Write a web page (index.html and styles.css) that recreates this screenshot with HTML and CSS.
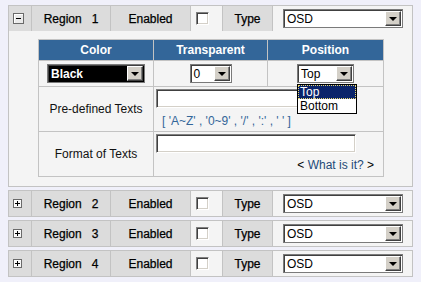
FILE: index.html
```html
<!DOCTYPE html>
<html lang="en">
<head>
	<meta charset="UTF-8" />
	<title>Regions</title>
	<link rel="stylesheet" href="styles.css">
</head>
<body>
	<div class="region">
		<div class="head">
			<div class="cell tog"><span class="btn minus"></span></div>
			<div class="cell name">Region&nbsp;&nbsp;&nbsp;1</div>
			<div class="cell">Enabled</div>
			<div class="cell chk"><span class="checkbox"></span></div>
			<div class="cell">Type</div>
			<div class="cell sel"><div class="select type"><span class="val">OSD</span><span class="arrow"></span></div></div>
		</div>
		<div class="body">
			<div class="props">
				<div class="th">Color</div>
				<div class="th">Transparent</div>
				<div class="th">Position</div>

				<div class="td"><div class="select color"><span class="val">Black</span><span class="arrow"></span></div></div>
				<div class="td"><div class="select alpha"><span class="val">0</span><span class="arrow"></span></div></div>
				<div class="td">
					<div class="select pos">
						<span class="val">Top</span><span class="arrow"></span>
						<ul class="list">
							<li class="on">Top</li>
							<li>Bottom</li>
						</ul>
					</div>
				</div>

				<div class="td label">Pre-defined Texts</div>
				<div class="td field">
					<span class="input"></span>
					<span class="hint">[ 'A~Z' , '0~9' , '/' , ':' , ' ' ]</span>
				</div>

				<div class="td label">Format of Texts</div>
				<div class="td field">
					<span class="input"></span>
					<span class="help">&lt; <span>What is it?</span> &gt;</span>
				</div>
			</div>
		</div>
	</div>

	<div class="region">
		<div class="head">
			<div class="cell tog"><span class="btn plus"></span></div>
			<div class="cell name">Region&nbsp;&nbsp;&nbsp;2</div>
			<div class="cell">Enabled</div>
			<div class="cell chk"><span class="checkbox"></span></div>
			<div class="cell">Type</div>
			<div class="cell sel"><div class="select type"><span class="val">OSD</span><span class="arrow"></span></div></div>
		</div>
	</div>

	<div class="region">
		<div class="head">
			<div class="cell tog"><span class="btn plus"></span></div>
			<div class="cell name">Region&nbsp;&nbsp;&nbsp;3</div>
			<div class="cell">Enabled</div>
			<div class="cell chk"><span class="checkbox"></span></div>
			<div class="cell">Type</div>
			<div class="cell sel"><div class="select type"><span class="val">OSD</span><span class="arrow"></span></div></div>
		</div>
	</div>

	<div class="region">
		<div class="head">
			<div class="cell tog"><span class="btn plus"></span></div>
			<div class="cell name">Region&nbsp;&nbsp;&nbsp;4</div>
			<div class="cell">Enabled</div>
			<div class="cell chk"><span class="checkbox"></span></div>
			<div class="cell">Type</div>
			<div class="cell sel"><div class="select type"><span class="val">OSD</span><span class="arrow"></span></div></div>
		</div>
	</div>
</body>
</html>
```

FILE: styles.css
```css
body {
	margin: 0;
	padding: 5px 8px 0;
	background: #f0f0fa;
	font-family: "Liberation Sans", Arial, sans-serif;
	font-size: 12px;
	color: #000;
}

.region {
	width: 403px;
	border: 1px solid #c3c3c3;
	background: #f4f4f4;
	margin-bottom: 3px;
}

.head {
	display: grid;
	grid-template-columns: 22px 78px 79px 31px 49px 139px;
	grid-template-rows: 25px;
	gap: 1px;
	background: #c3c3c3;
}

.head .cell {
	background: #dcdcdc;
	display: flex;
	align-items: center;
	justify-content: center;
	color: #000;
	-webkit-text-stroke: 0.25px #000;
}

.head .tog {
	justify-content: flex-start;
	padding-left: 4px;
}

.head .chk,
.head .sel {
	background: #f4f4f4;
	justify-content: flex-start;
	-webkit-text-stroke: 0;
}

.head .chk {
	padding-left: 5px;
}

.head .sel {
	padding-left: 10px;
}

.btn {
	display: block;
	position: relative;
	box-sizing: border-box;
	border: 1px solid #6a6a6a;
	background: #eaeaea;
	box-shadow: inset 1px 1px #fff;
}

.btn.minus {
	width: 11px;
	height: 11px;
}

.btn.plus {
	width: 9px;
	height: 9px;
	background: #f6f6f6;
}

.btn::before,
.btn.plus::after {
	content: "";
	position: absolute;
	background: #000;
}

.btn.minus::before {
	left: 2px;
	top: 4px;
	width: 5px;
	height: 1px;
}

.btn.plus::before {
	left: 1px;
	top: 3px;
	width: 5px;
	height: 1px;
}

.btn.plus::after {
	left: 3px;
	top: 1px;
	width: 1px;
	height: 5px;
}

.checkbox {
	display: block;
	width: 13px;
	height: 13px;
	box-sizing: border-box;
	background: #fff;
	border: 1px solid;
	border-color: #808080 #fff #fff #808080;
	box-shadow: inset 1px 1px #404040, inset -1px -1px #d4d0c8;
}

.select {
	position: relative;
	display: flex;
	align-items: center;
	box-sizing: border-box;
	height: 19px;
	background: #fff;
	border: 1px solid #7a7a7a;
	box-shadow: inset 1px 1px #404040;
	font-weight: normal;
	color: #000;
}

.select .val {
	flex: 1;
	padding-left: 3px;
	white-space: nowrap;
	overflow: hidden;
}

.select .arrow {
	align-self: stretch;
	width: 16px;
	margin: 1px 1px 1px 0;
	box-sizing: border-box;
	background: #d4d0c8;
	border: 1px solid;
	border-color: #fff #404040 #404040 #fff;
	box-shadow: inset -1px -1px #808080;
	display: flex;
	align-items: center;
	justify-content: center;
}

.select .arrow::before {
	content: "";
	border-left: 4px solid transparent;
	border-right: 4px solid transparent;
	border-top: 4px solid #000;
	margin-top: 1px;
}

.select.type {
	width: 120px;
}

.body {
	padding: 8px 0 9px 29px;
}

.props {
	display: grid;
	grid-template-columns: 114px 113px 115px;
	grid-template-rows: 20px 25px 44px 44px;
	gap: 1px;
	width: 344px;
	border: 1px solid #c3c3c3;
	background: #c3c3c3;
}

.props .th {
	background: #336699;
	color: #fff;
	font-weight: bold;
	display: flex;
	align-items: center;
	justify-content: center;
}

.props .td {
	background: #f4f4f4;
	display: flex;
	align-items: center;
	justify-content: center;
}

.select.color {
	width: 98px;
	background: #000;
	color: #fff;
	font-weight: bold;
}

.select.alpha {
	width: 42px;
}

.select.pos {
	width: 57px;
}

.list {
	position: absolute;
	left: -1px;
	top: 19px;
	width: 60px;
	box-sizing: border-box;
	margin: 0;
	padding: 0;
	list-style: none;
	background: #fff;
	border: 1px solid #000;
	z-index: 2;
}

.list li {
	height: 14px;
	line-height: 14px;
	padding-left: 2px;
}

.list li.on {
	background: #0a246a;
	color: #fff;
	outline: 1px dotted #e8d870;
	outline-offset: -1px;
}

.props .label {
	color: #111;
}

.props .field {
	grid-column: span 2;
	flex-direction: column;
	align-items: flex-start;
	justify-content: flex-start;
	padding: 2px 0 0 2px;
}

.input {
	display: block;
	width: 200px;
	height: 19px;
	box-sizing: border-box;
	background: #fff;
	border: 1px solid;
	border-color: #808080 #fff #fff #808080;
	box-shadow: inset 1px 1px #404040, inset -1px -1px #d4d0c8;
}

.hint {
	margin: 6px 0 0 6px;
	color: #336699;
}

.help {
	align-self: flex-end;
	margin: 5px 9px 0 0;
}

.help span {
	color: #1e4a78;
}
```
